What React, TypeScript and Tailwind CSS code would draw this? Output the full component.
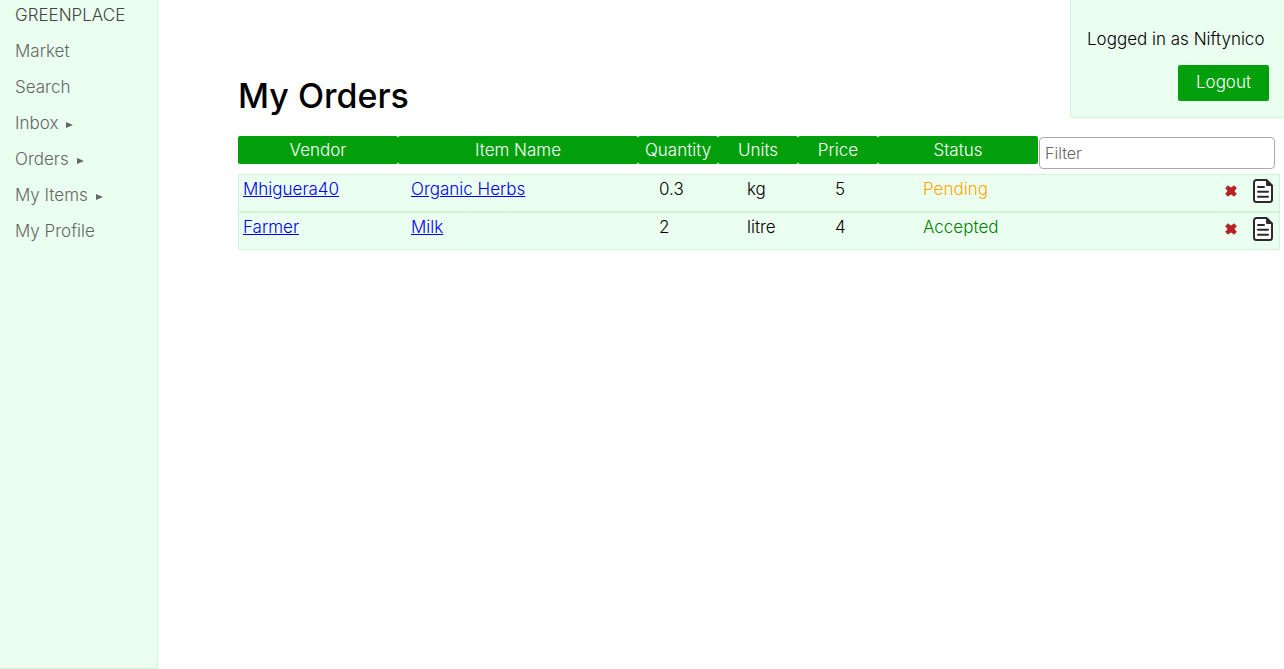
import { useState } from "react";

type Order = {
  vendor: string;
  item: string;
  quantity: number;
  units: string;
  price: number;
  status: "Pending" | "Accepted";
};

const orders: Order[] = [
  { vendor: "Mhiguera40", item: "Organic Herbs", quantity: 0.3, units: "kg", price: 5, status: "Pending" },
  { vendor: "Farmer", item: "Milk", quantity: 2, units: "litre", price: 4, status: "Accepted" },
];

const links = [
  { label: "Market", submenu: false },
  { label: "Search", submenu: false },
  { label: "Inbox", submenu: true },
  { label: "Orders", submenu: true },
  { label: "My Items", submenu: true },
  { label: "My Profile", submenu: false },
];

const columns = [
  { label: "Vendor", width: "w-40" },
  { label: "Item Name", width: "w-60" },
  { label: "Quantity", width: "w-20" },
  { label: "Units", width: "w-20" },
  { label: "Price", width: "w-20" },
  { label: "Status", width: "w-40" },
];

function CrossIcon() {
  return (
    <svg className="h-3 w-3" viewBox="0 0 12 12" aria-hidden="true">
      <path
        d="M3 .7 6 3 9 .7 11.500 3 9 6l2.500 3L9 11.300 6 9 3 11.300.5 9 3 6 .5 3Z"
        fill="#b92020"
        stroke="#9b2a22"
        strokeWidth=".7"
        strokeLinejoin="round"
      />
    </svg>
  );
}

function NoteIcon() {
  return (
    <svg className="h-6 w-5" viewBox="0 0 20 24" aria-hidden="true">
      <path
        d="M3.500 1h10L19 6.500V20.500a2.500 2.500 0 0 1-2.500 2.500h-13A2.500 2.500 0 0 1 1 20.500v-17A2.500 2.500 0 0 1 3.500 1Z"
        fill="#fff"
        stroke="#2b2b2b"
        strokeWidth="2"
        strokeLinejoin="round"
      />
      <path d="M13 1v4.500q0 1.500 1.500 1.500H19Z" fill="#2b2b2b" />
      <path d="M5 8h6M5 12.800h10M5 17.800h10" stroke="#2b2b2b" strokeWidth="2" strokeLinecap="round" />
    </svg>
  );
}

function Sidebar() {
  return (
    <nav className="w-[158px] shrink-0 border-r border-b border-[#cff7d5] bg-[#ebfff1] px-[15px] pt-[5px] leading-5">
      <a href="#home" className="block text-[#444]">GREENPLACE</a>
      <ul className="mt-4 flex flex-col gap-4 text-[#666]">
        {links.map((link) => (
          <li key={link.label}>
            <a href="#menu" className="flex items-center gap-2">
              {link.label}
              {link.submenu && (
                <svg className="mt-1 h-[6px] w-[7px]" viewBox="0 0 7 6" aria-hidden="true">
                  <path d="M0 0 7 3 0 6Z" fill="#666" />
                </svg>
              )}
            </a>
          </li>
        ))}
      </ul>
    </nav>
  );
}

export default function App() {
  const [filter, setFilter] = useState("");
  const query = filter.toLowerCase();
  const visible = orders.filter((order) => (order.vendor + " " + order.item).toLowerCase().includes(query));

  return (
    <div className="flex min-h-screen bg-white font-['Inter','Open_Sans',sans-serif] text-[17px] font-light text-black">
      <Sidebar />
      <main className="min-w-0 flex-1 pl-20">
        <header className="flex items-start justify-between">
          <h1 className="pt-[76px] text-[34px] leading-10 font-medium">My Orders</h1>
          <div className="flex min-w-[214px] flex-col items-end gap-4 border-b border-l border-[#cff7d5] bg-[#ebfff1] pt-[29px] pr-[15px] pb-4 pl-4">
            <p className="w-full leading-5">Logged in as Niftynico</p>
            <button type="button" className="h-9 min-w-[91px] rounded-xs bg-[#009f0b] px-4 text-white">Logout</button>
          </div>
        </header>

        <table className="mt-[18px] block pr-1">
          <thead className="block">
            <tr className="flex items-start">
              {columns.map((column) => (
                <th
                  key={column.label}
                  scope="col"
                  className={"h-7 shrink-0 rounded-xs bg-[#009f0b] text-center leading-7 font-light text-white " + column.width}
                >
                  {column.label}
                </th>
              ))}
              <td className="min-w-0 flex-1 pt-px pr-[5px] pl-px">
                <input
                  type="text"
                  aria-label="Filter"
                  placeholder="Filter"
                  value={filter}
                  onChange={(event) => setFilter(event.target.value)}
                  className="block h-8 w-full rounded border border-[#aaa] bg-white px-[5px] text-base placeholder:text-[#666]"
                />
              </td>
            </tr>
          </thead>
          <tbody className="mt-[5px] block">
            {visible.map((order) => (
              <tr
                key={order.vendor}
                className="flex h-[38px] items-start border border-[#cff7d5] bg-[#ebfff1] pt-1 pr-[6px] pl-1 leading-5"
              >
                <td className="w-[168px] shrink-0">
                  <a href="#vendor" className="text-[#0000ee] underline">{order.vendor}</a>
                </td>
                <td className="w-[248px] shrink-0">
                  <a href="#item" className="text-[#0000ee] underline">{order.item}</a>
                </td>
                <td className="w-[88px] shrink-0">{order.quantity}</td>
                <td className="w-[88px] shrink-0">{order.units}</td>
                <td className="w-[88px] shrink-0">{order.price}</td>
                <td className={order.status === "Pending" ? "flex-1 text-[#ffa500]" : "flex-1 text-[#008000]"}>
                  {order.status}
                </td>
                <td className="flex items-center gap-4">
                  <button type="button" aria-label="Cancel order"><CrossIcon /></button>
                  <button type="button" aria-label="Order note"><NoteIcon /></button>
                </td>
              </tr>
            ))}
          </tbody>
        </table>
      </main>
    </div>
  );
}
